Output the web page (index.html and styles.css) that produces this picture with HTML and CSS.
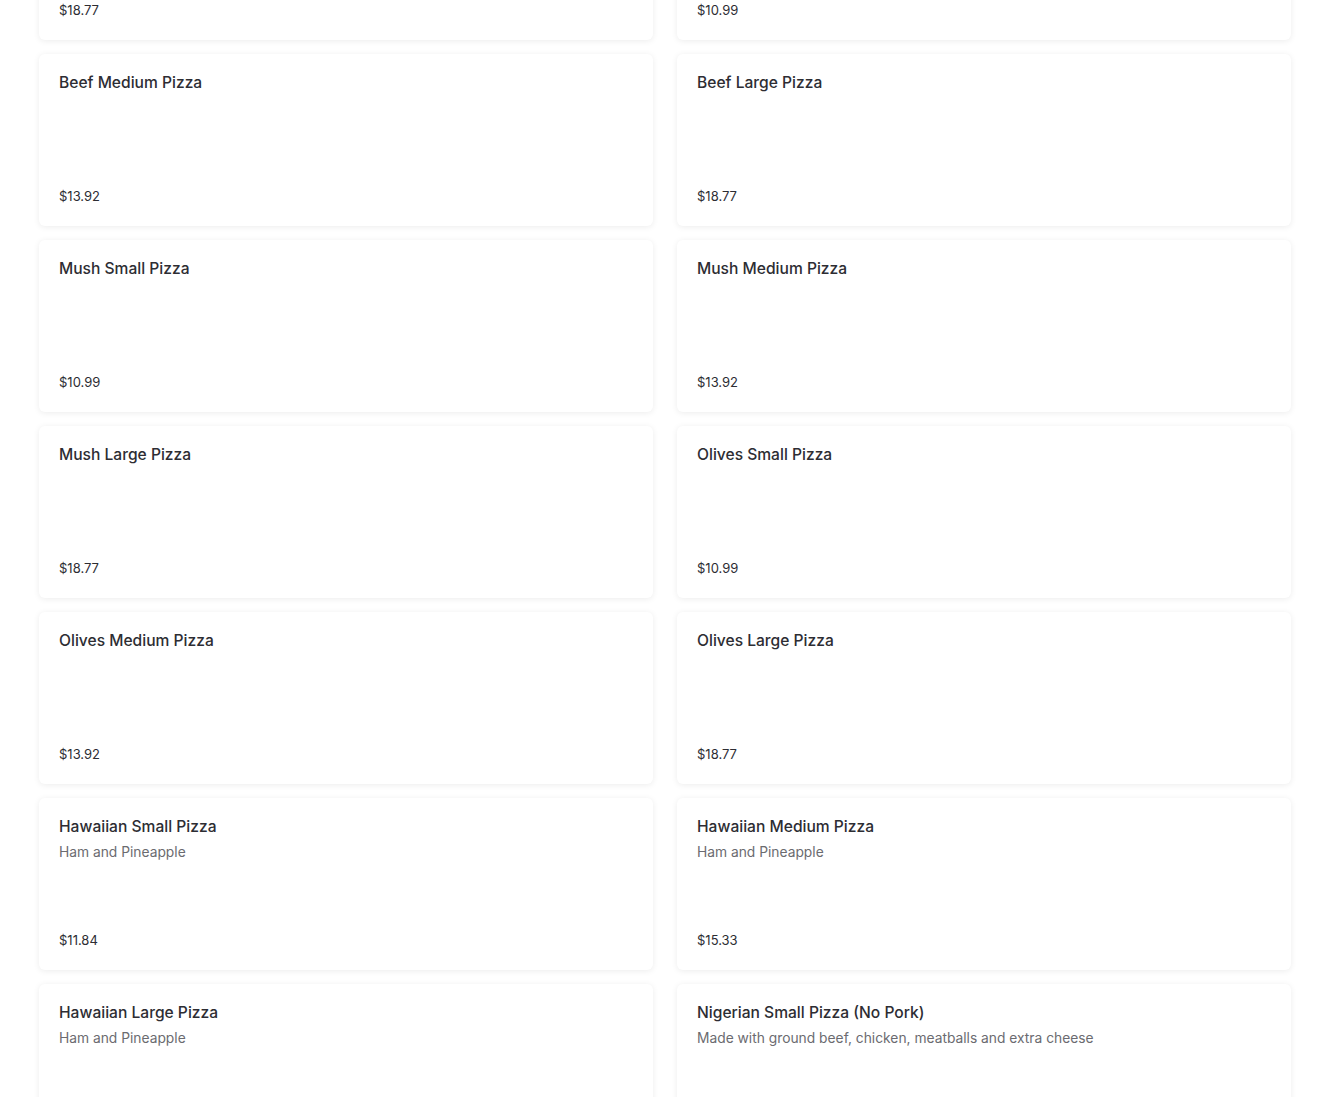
FILE: index.html
```html
<!DOCTYPE html>
<html lang="en">
<head>
    <meta charset="UTF-8">
    <meta name="viewport" content="width=device-width, initial-scale=1.0">
    <title>Menu - Pizza</title>
    <link rel="stylesheet" href="styles.css">
</head>
<body>
    <div class="menu-list">
        <div class="item-card">
            <div class="item-top">
                <h3 class="item-name">Pepperoni Large Pizza</h3>
            </div>
            <span class="item-price">$18.77</span>
        </div>
        <div class="item-card">
            <div class="item-top">
                <h3 class="item-name">Beef Small Pizza</h3>
            </div>
            <span class="item-price">$10.99</span>
        </div>

        <div class="item-card">
            <div class="item-top">
                <h3 class="item-name">Beef Medium Pizza</h3>
            </div>
            <span class="item-price">$13.92</span>
        </div>
        <div class="item-card">
            <div class="item-top">
                <h3 class="item-name">Beef Large Pizza</h3>
            </div>
            <span class="item-price">$18.77</span>
        </div>

        <div class="item-card">
            <div class="item-top">
                <h3 class="item-name">Mush Small Pizza</h3>
            </div>
            <span class="item-price">$10.99</span>
        </div>
        <div class="item-card">
            <div class="item-top">
                <h3 class="item-name">Mush Medium Pizza</h3>
            </div>
            <span class="item-price">$13.92</span>
        </div>

        <div class="item-card">
            <div class="item-top">
                <h3 class="item-name">Mush Large Pizza</h3>
            </div>
            <span class="item-price">$18.77</span>
        </div>
        <div class="item-card">
            <div class="item-top">
                <h3 class="item-name">Olives Small Pizza</h3>
            </div>
            <span class="item-price">$10.99</span>
        </div>

        <div class="item-card">
            <div class="item-top">
                <h3 class="item-name">Olives Medium Pizza</h3>
            </div>
            <span class="item-price">$13.92</span>
        </div>
        <div class="item-card">
            <div class="item-top">
                <h3 class="item-name">Olives Large Pizza</h3>
            </div>
            <span class="item-price">$18.77</span>
        </div>

        <div class="item-card">
            <div class="item-top">
                <h3 class="item-name">Hawaiian Small Pizza</h3>
                <p class="item-desc">Ham and Pineapple</p>
            </div>
            <span class="item-price">$11.84</span>
        </div>
        <div class="item-card">
            <div class="item-top">
                <h3 class="item-name">Hawaiian Medium Pizza</h3>
                <p class="item-desc">Ham and Pineapple</p>
            </div>
            <span class="item-price">$15.33</span>
        </div>

        <div class="item-card">
            <div class="item-top">
                <h3 class="item-name">Hawaiian Large Pizza</h3>
                <p class="item-desc">Ham and Pineapple</p>
            </div>
            <span class="item-price">$19.50</span>
        </div>
        <div class="item-card">
            <div class="item-top">
                <h3 class="item-name">Nigerian Small Pizza (No Pork)</h3>
                <p class="item-desc">Made with ground beef, chicken, meatballs and extra cheese</p>
            </div>
            <span class="item-price">$12.99</span>
        </div>
    </div>
</body>
</html>
```

FILE: styles.css
```css
body {
    font-family: Inter, "Open Sans", sans-serif;
    margin: 0;
    padding: 0;
    background: #fff;
    color: #2d2d33;
}
.menu-list {
    display: grid;
    grid-template-columns: 1fr 1fr;
    column-gap: 24px;
    row-gap: 14px;
    padding: 0 39px 40px;
    margin-top: -132px; /* list is shown scrolled down */
}
.item-card {
    display: flex;
    flex-direction: column;
    justify-content: space-between;
    height: 172px;
    box-sizing: border-box;
    padding: 21px 20px 20px;
    background: #fff;
    border-radius: 6px;
    box-shadow: 0 1px 6px rgba(0, 0, 0, 0.08);
}
.item-name {
    margin: 0;
    font-size: 15.6px;
    line-height: 16px;
    font-weight: 500;
    color: #2d2d33;
}
.item-desc {
    margin: 7px 0 0;
    font-size: 13.8px;
    line-height: 20px;
    color: #6b6b70;
}
.item-price {
    font-size: 13px;
    line-height: 20px;
    color: #2d2d33;
}
```
